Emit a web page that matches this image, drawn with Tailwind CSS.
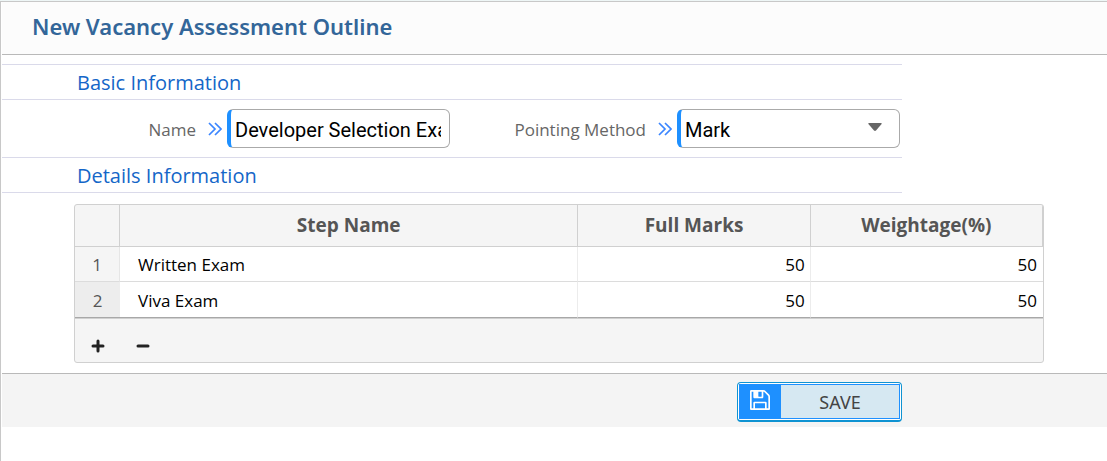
<!DOCTYPE html>
<html lang="en">

<head>
    <meta charset="UTF-8">
    <meta name="viewport" content="width=device-width, initial-scale=1.0">
    <title>New Vacancy Assessment Outline</title>
    <script src="https://cdn.jsdelivr.net/npm/@tailwindcss/browser@4"></script>
</head>

<body class="bg-[#eef6f6] pt-px font-['Open_Sans',sans-serif]">
    <div class="min-h-[calc(100vh-1px)] border-t border-l border-[#c8c8c8] bg-white pl-px">
        <header class="flex h-[53px] items-center border-b border-[#b9b9b9] bg-[#fcfcfc] pl-[30px]">
            <h1 class="pb-1 font-['Noto_Sans',sans-serif] text-[22px] font-semibold text-[#336699]">New Vacancy Assessment Outline</h1>
        </header>

        <form>
            <div class="mt-[9px] max-w-[900px]">
                <h2 class="flex h-9 items-center border-y border-[#dadaea] pl-[75px] pt-0.5 text-xl text-[#1466c8]">Basic Information</h2>

                <div class="grid grid-cols-2 py-[9px]">
                    <div class="flex items-center justify-end pr-0.5">
                        <label for="name" class="pt-0.5 text-[17px] text-[#666]">Name</label>
                        <svg class="ml-3 mr-[5px] h-3.5 w-3.5" viewBox="0 0 14 14" fill="none" stroke="#3b86ff" stroke-width="1.7" aria-hidden="true">
                            <path d="M1 1l6 6-6 6M7 1l6 6-6 6" />
                        </svg>
                        <input id="name" type="text" value="Developer Selection Exam"
                            class="h-[39px] w-[223px] rounded-md border border-l-4 border-[#aaa] border-l-[#1e90ff] bg-white pl-1 pr-2 pt-0.5 font-['Roboto',sans-serif] text-xl text-black">
                    </div>
                    <div class="flex items-center justify-end pr-0.5">
                        <label for="method" class="pt-0.5 text-[17px] text-[#666]">Pointing Method</label>
                        <svg class="ml-3 mr-[5px] h-3.5 w-3.5" viewBox="0 0 14 14" fill="none" stroke="#3b86ff" stroke-width="1.7" aria-hidden="true">
                            <path d="M1 1l6 6-6 6M7 1l6 6-6 6" />
                        </svg>
                        <div class="relative">
                            <select id="method"
                                class="h-[39px] w-[223px] appearance-none rounded-md border border-l-4 border-[#aaa] border-l-[#1e90ff] bg-white pl-1 pr-8 pt-0.5 font-['Roboto',sans-serif] text-xl text-black">
                                <option>Mark</option>
                                <option>Percentage</option>
                            </select>
                            <svg class="pointer-events-none absolute right-[18px] top-3.5 h-2 w-3.5" viewBox="0 0 14 8" fill="#666" aria-hidden="true">
                                <path d="M1 0h12q1 0 .6 1L8 7.500q-1 .8-2 0L.4 1Q0 0 1 0z" />
                            </svg>
                        </div>
                    </div>
                </div>

                <h2 class="flex h-9 items-center border-y border-[#dadaea] pl-[75px] pt-0.5 text-xl text-[#1466c8]">Details Information</h2>
            </div>

            <div class="ml-[72px] mr-[63px] mt-[11px] overflow-hidden rounded-[3px] border border-[#d0d0d0] bg-[#f5f5f5]">
                <table class="w-full table-fixed border-separate border-spacing-0 text-[17px] text-black">
                    <colgroup>
                        <col class="w-[45px]">
                        <col>
                        <col class="w-[24%]">
                        <col class="w-[24%]">
                    </colgroup>
                    <thead class="text-[19px] text-[#555]">
                        <tr class="h-[42px]">
                            <th class="border-r border-b border-[#d0d0d0]"></th>
                            <th scope="col" class="border-r border-b border-[#d0d0d0] font-bold">Step Name</th>
                            <th scope="col" class="border-r border-b border-[#d0d0d0] font-bold">Full Marks</th>
                            <th scope="col" class="border-r border-b border-[#d0d0d0] font-bold">Weightage(%)</th>
                        </tr>
                    </thead>
                    <tbody>
                        <tr class="h-[35px] bg-white">
                            <td class="border-r border-b border-[#dcdcdc] border-r-[#e6e6e6] bg-[#f5f5f5] pt-0.5 text-center text-[#555]">1</td>
                            <td class="border-r border-b border-[#dcdcdc] border-r-[#ececec] pl-[18px] pt-0.5">Written Exam</td>
                            <td class="border-r border-b border-[#dcdcdc] border-r-[#ececec] pr-[5px] pt-0.5 text-right">50</td>
                            <td class="border-b border-[#dcdcdc] pr-1.5 pt-0.5 text-right">50</td>
                        </tr>
                        <tr class="h-9 bg-white">
                            <td class="border-b border-[#a8a8a8] bg-[#ededed] pt-0.5 text-center text-[#555]">2</td>
                            <td class="border-r border-b border-[#a8a8a8] border-r-[#ececec] pl-[18px] pt-0.5">Viva Exam</td>
                            <td class="border-r border-b border-[#a8a8a8] border-r-[#ececec] pr-[5px] pt-0.5 text-right">50</td>
                            <td class="border-b border-[#a8a8a8] pr-1.5 pt-0.5 text-right">50</td>
                        </tr>
                    </tbody>
                </table>
                <div class="flex h-11 items-center gap-[31px] border-t border-[#d0d0d0] pl-4 pt-2.5">
                    <button type="button" aria-label="Add row">
                        <svg class="block h-3.5 w-3.5" viewBox="0 0 14 14" stroke="#222" stroke-width="3" stroke-linecap="round">
                            <path d="M7 2v10M2 7h10" />
                        </svg>
                    </button>
                    <button type="button" aria-label="Remove row">
                        <svg class="block h-3.5 w-3.5" viewBox="0 0 14 14" stroke="#222" stroke-width="3" stroke-linecap="round">
                            <path d="M2 7h10" />
                        </svg>
                    </button>
                </div>
            </div>

            <footer class="mt-2.5 border-t border-[#b9b9b9] bg-[#f4f4f4]">
                <div class="flex max-w-[900px] justify-end pb-[5px] pt-2">
                    <button type="submit" class="h-10 w-[165px] rounded-[4px] border border-b-2 border-[#0f93d2] bg-white p-px">
                        <span class="flex h-full border border-[#1e90ff] bg-[#d6e8f2]">
                            <span class="flex w-[41px] justify-center bg-[#1e90ff] pr-0.5 pt-[5px]">
                                <svg class="h-5 w-5" viewBox="0 0 1536 1536" fill="#fff" aria-hidden="true">
                                    <path d="M384 1408h768v-384H384v384zm896 0h128V512q0-14-10-38.500t-20-34.500l-281-281q-10-10-34-20t-39-10v416q0 40-28 68t-68 28H352q-40 0-68-28t-28-68V128H128v1280h128V992q0-40 28-68t68-28h832q40 0 68 28t28 68v416zM896 480V160q0-13-9.500-22.500T864 128H672q-13 0-22.500 9.500T640 160v320q0 13 9.500 22.500T672 512h192q13 0 22.500-9.500T896 480zm640 32v928q0 40-28 68t-68 28H96q-40 0-68-28t-28-68V96q0-40 28-68T96 0h928q40 0 88 20t76 48l280 280q28 28 48 76t20 88z" />
                                </svg>
                            </span>
                            <span class="flex flex-1 items-center justify-center font-['Noto_Sans',sans-serif] text-lg text-[#444]">SAVE</span>
                        </span>
                    </button>
                </div>
            </footer>
        </form>
    </div>
</body>

</html>
